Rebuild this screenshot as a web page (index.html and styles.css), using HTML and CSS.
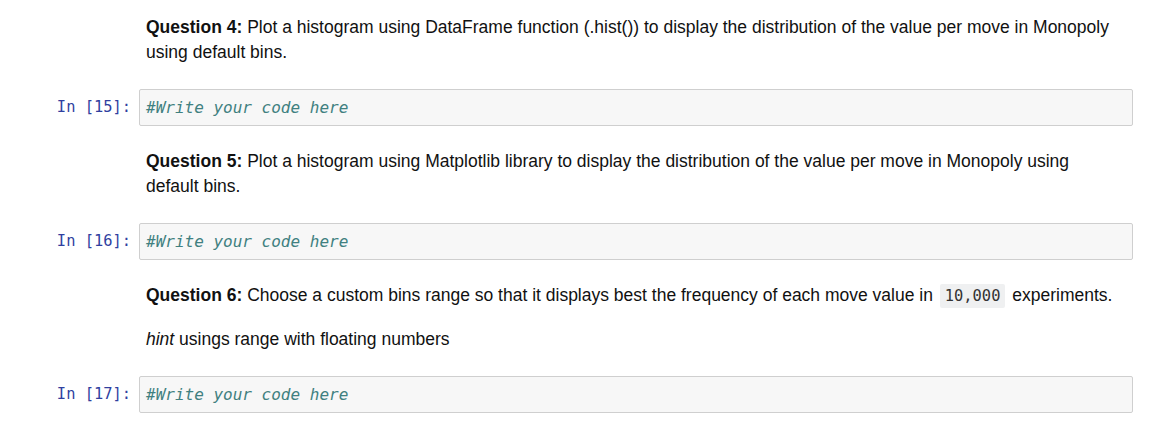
FILE: index.html
```html
<!DOCTYPE html>
<html>
<head>
<meta charset="utf-8">
<link rel="stylesheet" href="styles.css">
</head>
<body>
<div class="notebook">
  <div class="cell md">
    <div class="prompt"></div>
    <div class="md-body">
      <p><strong>Question 4:</strong> Plot a histogram using DataFrame function (.hist()) to display the distribution of the value per move in Monopoly using default bins.</p>
    </div>
  </div>
  <div class="cell code">
    <div class="prompt">In&nbsp;[15]:</div>
    <div class="input"><span class="comment">#Write your code here</span></div>
  </div>
  <div class="cell md">
    <div class="prompt"></div>
    <div class="md-body">
      <p><strong>Question 5:</strong> Plot a histogram using Matplotlib library to display the distribution of the value per move in Monopoly using default bins.</p>
    </div>
  </div>
  <div class="cell code">
    <div class="prompt">In&nbsp;[16]:</div>
    <div class="input"><span class="comment">#Write your code here</span></div>
  </div>
  <div class="cell md">
    <div class="prompt"></div>
    <div class="md-body">
      <p><strong>Question 6:</strong> Choose a custom bins range so that it displays best the frequency of each move value in <code>10,000</code> experiments.</p>
      <p><em>hint</em> usings range with floating numbers</p>
    </div>
  </div>
  <div class="cell code">
    <div class="prompt">In&nbsp;[17]:</div>
    <div class="input"><span class="comment">#Write your code here</span></div>
  </div>
</div>
</body>
</html>
```

FILE: styles.css
```css
html, body {
  margin: 0;
  padding: 0;
  background: #ffffff;
}

.notebook {
  padding: 15px 24px 0 48px;
  display: flex;
  flex-direction: column;
}

.cell {
  display: flex;
  align-items: flex-start;
}

.prompt {
  flex: 0 0 91px;
  box-sizing: border-box;
  padding-right: 8px;
  text-align: right;
  font-family: "DejaVu Sans Mono", monospace;
  font-size: 15.4px;
  color: #303f9f;
  line-height: 36px;
}

.md-body {
  flex: 1;
  padding-left: 7px;
  padding-right: 12px;
  font-family: "Liberation Sans", Arial, sans-serif;
  font-size: 17.5px;
  line-height: 25px;
  color: #111;
}

.md-body p {
  margin: 0 0 18px 0;
}

.md-body p:last-child {
  margin-bottom: 0;
}

.cell.md + .cell.code {
  margin-top: 24px;
}

.cell.code + .cell.md {
  margin-top: 23px;
}

.input {
  flex: 1;
  box-sizing: border-box;
  height: 37px;
  background: #f7f7f7;
  border: 1px solid #cfcfcf;
  border-radius: 2px;
  padding: 0 6px;
  font-family: "DejaVu Sans Mono", monospace;
  font-size: 16px;
  line-height: 35px;
}

.comment {
  font-style: italic;
  color: #408080;
}

code {
  font-family: "DejaVu Sans Mono", monospace;
  font-size: 15.4px;
  background: #eff0f1;
  color: #333;
  padding: 3px 5px;
  margin: 0 2px;
  border-radius: 2px;
}
```
